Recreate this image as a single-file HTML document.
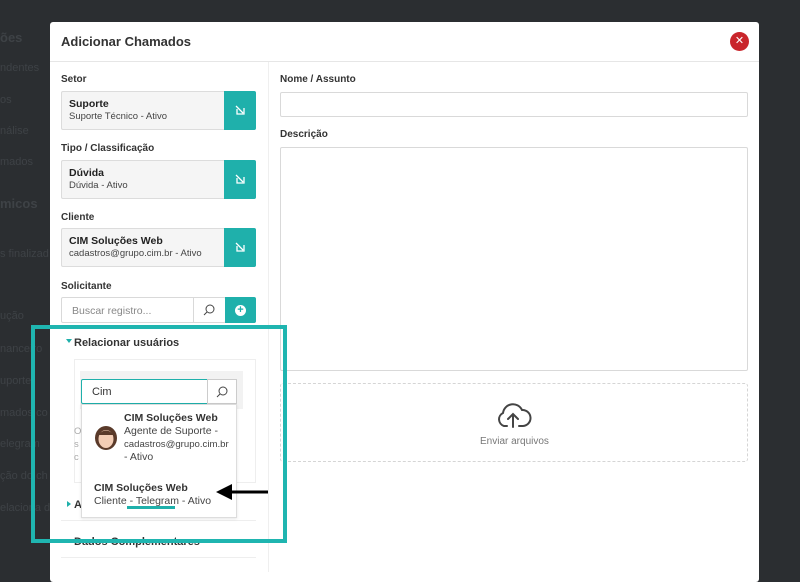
<!DOCTYPE html>
<html><head><meta charset="utf-8"><style>
*{box-sizing:border-box;margin:0;padding:0}
body{width:800px;height:572px;overflow:hidden;background:#2b2e31;font-family:"Liberation Sans",sans-serif;position:relative;color:#333}
.a{position:absolute}
.bg{color:#3e4246;font-size:11px}
.lbl{font-size:10px;font-weight:bold;color:#333}
.sel{position:absolute;left:61px;width:195px;height:39px;background:#f5f5f5;border:1px solid #dcdcdc;border-radius:2px}
.sel b{position:absolute;left:7px;top:6px;font-size:10.5px;color:#222}
.sel span{position:absolute;left:7px;top:19px;font-size:9.5px;color:#444}
.tb{position:absolute;right:-1px;top:-1px;width:32px;height:39px;background:#1fb0ab;border-radius:0 2px 2px 0}
.inp{position:absolute;background:#fff;border:1px solid #d9d9d9;border-radius:2px}
.sec{font-size:11px;font-weight:bold;color:#333}
</style></head><body>
<div class="a bg" style="left:0;top:30px;font-size:13px;font-weight:bold">ões</div>
<div class="a bg" style="left:0;top:62px">ndentes</div>
<div class="a bg" style="left:0;top:94px">os</div>
<div class="a bg" style="left:0;top:125px">nálise</div>
<div class="a bg" style="left:0;top:156px">mados</div>
<div class="a bg" style="left:0;top:196px;font-size:13px;font-weight:bold">micos</div>
<div class="a bg" style="left:0;top:248px">s finalizad</div>
<div class="a bg" style="left:0;top:310px">ução</div>
<div class="a bg" style="left:0;top:343px">nanceiro</div>
<div class="a bg" style="left:0;top:375px">uporte</div>
<div class="a bg" style="left:0;top:407px">mados co</div>
<div class="a bg" style="left:0;top:438px">elegram</div>
<div class="a bg" style="left:0;top:470px">ção do ch</div>
<div class="a bg" style="left:0;top:502px">elaciona do</div>

<div class="a" style="left:50px;top:22px;width:709px;height:560px;background:#fff;border-radius:3px"></div>
<div class="a" style="left:61px;top:34px;font-size:13px;font-weight:bold;color:#333">Adicionar Chamados</div>
<div class="a" style="left:730px;top:32px;width:19px;height:19px;border-radius:50%;background:#c9252b;color:#fff;font-size:11px;line-height:19px;text-align:center">✕</div>
<div class="a" style="left:50px;top:61px;width:709px;height:1px;background:#e6e6e6"></div>
<div class="a" style="left:268px;top:62px;width:1px;height:510px;background:#efefef"></div>

<div class="a lbl" style="left:61px;top:74px">Setor</div>
<div class="sel" style="top:91px"><b>Suporte</b><span>Suporte Técnico - Ativo</span><div class="tb"><svg width="32" height="39"><path d="M12 15l7 7M13 18v5h7v-6" stroke="#fff" stroke-width="1.3" fill="none"/></svg></div></div>
<div class="a lbl" style="left:61px;top:143px">Tipo / Classificação</div>
<div class="sel" style="top:160px"><b>Dúvida</b><span>Dúvida - Ativo</span><div class="tb"><svg width="32" height="39"><path d="M12 15l7 7M13 18v5h7v-6" stroke="#fff" stroke-width="1.3" fill="none"/></svg></div></div>
<div class="a lbl" style="left:61px;top:212px">Cliente</div>
<div class="sel" style="top:228px"><b>CIM Soluções Web</b><span>cadastros@grupo.cim.br - Ativo</span><div class="tb"><svg width="32" height="39"><path d="M12 15l7 7M13 18v5h7v-6" stroke="#fff" stroke-width="1.3" fill="none"/></svg></div></div>
<div class="a lbl" style="left:61px;top:281px">Solicitante</div>
<div class="inp" style="left:61px;top:297px;width:165px;height:26px"><span class="a" style="left:10px;top:7px;font-size:10.5px;color:#888">Buscar registro...</span></div>
<div class="a" style="left:193px;top:297px;width:1px;height:26px;background:#d9d9d9"></div>
<svg class="a" style="left:202px;top:303px" width="14" height="14"><circle cx="8" cy="6" r="4" stroke="#444" fill="none"/><path d="M5 9l-3 3" stroke="#444"/></svg>
<div class="a" style="left:225px;top:297px;width:31px;height:26px;background:#1fb0ab;border-radius:0 2px 2px 0"><div class="a" style="left:10px;top:8px;width:11px;height:11px;border-radius:50%;background:#fff;color:#1fb0ab;font-size:11px;font-weight:bold;line-height:11px;text-align:center">+</div></div>

<div class="a lbl" style="left:280px;top:74px">Nome / Assunto</div>
<div class="inp" style="left:280px;top:92px;width:468px;height:25px"></div>
<div class="a lbl" style="left:280px;top:129px">Descrição</div>
<div class="inp" style="left:280px;top:147px;width:468px;height:224px"></div>
<div class="a" style="left:280px;top:383px;width:468px;height:79px;border:1px dashed #d5d5d5;border-radius:3px"></div>
<svg class="a" style="left:495px;top:399px" width="38" height="30"><path d="M12 27H9a7 7 0 0 1-1-13 10 10 0 0 1 19-3 8 8 0 0 1 1 16h-4" stroke="#444" stroke-width="2" fill="none" stroke-linecap="round"/><path d="M18 28V16M13 20l5-5 5 5" stroke="#444" stroke-width="2" fill="none" stroke-linecap="round"/></svg>
<div class="a" style="left:480px;top:436px;font-size:10px;color:#777">Enviar arquivos</div>

<div class="a" style="left:66px;top:339px;width:0;height:0;border-left:3px solid transparent;border-right:3px solid transparent;border-top:4px solid #1fb0ab"></div>
<div class="a sec" style="left:74px;top:337px">Relacionar usuários</div>
<div class="a" style="left:74px;top:359px;width:182px;height:124px;border:1px solid #eee"></div>
<div class="a" style="left:80px;top:371px;width:163px;height:38px;background:#f2f2f2"></div>
<div class="a" style="left:74px;top:425px;font-size:9.5px;color:#aaa;line-height:13px">O<br>s<br>c</div>
<div class="a" style="left:67px;top:501px;width:0;height:0;border-top:3px solid transparent;border-bottom:3px solid transparent;border-left:4px solid #1fb0ab"></div>
<div class="a sec" style="left:74px;top:499px">A</div>
<div class="a" style="left:61px;top:520px;width:195px;height:1px;background:#eee"></div>
<div class="a sec" style="left:74px;top:536px">Dados Complementares</div>
<div class="a" style="left:61px;top:557px;width:195px;height:1px;background:#eee"></div>

<div class="a" style="left:81px;top:379px;width:127px;height:25px;background:#fff;border:1px solid #1fb0ab;border-radius:2px 0 0 2px"><span class="a" style="left:10px;top:6px;font-size:11px;color:#333">Cim</span></div>
<div class="a" style="left:207px;top:379px;width:30px;height:25px;background:#fff;border:1px solid #ccc"></div>
<svg class="a" style="left:215px;top:385px" width="14" height="14"><circle cx="8" cy="6" r="4" stroke="#444" fill="none"/><path d="M5 9l-3 3" stroke="#444"/></svg>
<div class="a" style="left:81px;top:404px;width:156px;height:114px;background:#fff;border:1px solid #ddd;box-shadow:0 1px 3px rgba(0,0,0,.1)"></div>
<svg class="a" style="left:94px;top:425px" width="24" height="28"><ellipse cx="12" cy="13" rx="11" ry="12" fill="#5a3a2a"/><ellipse cx="12" cy="14" rx="7.5" ry="9" fill="#f3cdb5"/><path d="M4 10q8-9 16 0" fill="#5a3a2a"/></svg>
<div class="a" style="left:124px;top:412px;font-size:10.5px;line-height:13px;color:#444;white-space:nowrap"><b style="color:#333">CIM Soluções Web</b><br>Agente de Suporte -<br><span style="font-size:9.6px">cadastros@grupo.cim.br</span><br>- Ativo</div>
<div class="a" style="left:94px;top:482px;font-size:10.5px;line-height:13px;color:#444"><b style="color:#333">CIM Soluções Web</b><br>Cliente - Telegram - Ativo</div>
<div class="a" style="left:127px;top:506px;width:48px;height:3px;background:#1fb0ab"></div>
<svg class="a" style="left:214px;top:482px" width="56" height="20"><path d="M54 10H14" stroke="#000" stroke-width="3"/><path d="M2 10L18 2V18Z" fill="#000"/></svg>

<div class="a" style="left:31px;top:325px;width:256px;height:218px;border:4px solid #1fb5b0"></div>
</body></html>
